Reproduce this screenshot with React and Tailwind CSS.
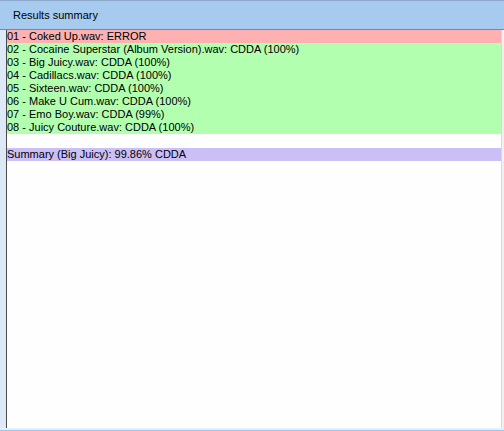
import React from 'react';

const rows = [
    { text: '01 - Coked Up.wav: ERROR', bg: 'bg-[#ffb0b0]' },
    { text: '02 - Cocaine Superstar (Album Version).wav: CDDA (100%)', bg: 'bg-[#b3ffb0]' },
    { text: '03 - Big Juicy.wav: CDDA (100%)', bg: 'bg-[#b3ffb0]' },
    { text: '04 - Cadillacs.wav: CDDA (100%)', bg: 'bg-[#b3ffb0]' },
    { text: '05 - Sixteen.wav: CDDA (100%)', bg: 'bg-[#b3ffb0]' },
    { text: '06 - Make U Cum.wav: CDDA (100%)', bg: 'bg-[#b3ffb0]' },
    { text: '07 - Emo Boy.wav: CDDA (99%)', bg: 'bg-[#b3ffb0]' },
    { text: '08 - Juicy Couture.wav: CDDA (100%)', bg: 'bg-[#b3ffb0]' },
];

export default function App() {
    return (
        <div className="w-[504px] h-[431px] flex flex-col bg-white overflow-hidden font-['Liberation_Sans',Arial,sans-serif] text-[11px] text-black">
            {/* Title bar */}
            <div className="h-[30px] shrink-0 flex items-center pl-[13px] pt-[1px] bg-[#a7caef] border-t border-[#8ea9cc] border-b border-b-[#7d8794]">
                Results summary
            </div>

            <div className="flex-1 flex min-h-0">
                {/* left strip */}
                <div className="w-[6px] shrink-0 bg-[#dde9f7]" />
                <div className="w-[1px] shrink-0 bg-[#4a4a4a]" />

                {/* list */}
                <div className="flex-1 flex flex-col">
                    {rows.map((r, i) => (
                        <div key={i} className={`h-[13px] leading-[13px] whitespace-nowrap ${r.bg}`}>{r.text}</div>
                    ))}
                    <div className="h-[14px]" />
                    <div className="h-[13px] leading-[13px] bg-[#cbbff5]">Summary (Big Juicy): 99.86% CDDA</div>
                    <div className="flex-1 bg-[#fefefe]" />
                </div>

                <div className="w-[3px] shrink-0 bg-[#f0f0f0] border-l border-[#d8d8d8]" />
            </div>

            {/* bottom edge */}
            <div className="h-[2px] shrink-0 bg-[#e6eef8]" />
            <div className="h-[1px] shrink-0 bg-[#9cc3ec]" />
        </div>
    );
}
